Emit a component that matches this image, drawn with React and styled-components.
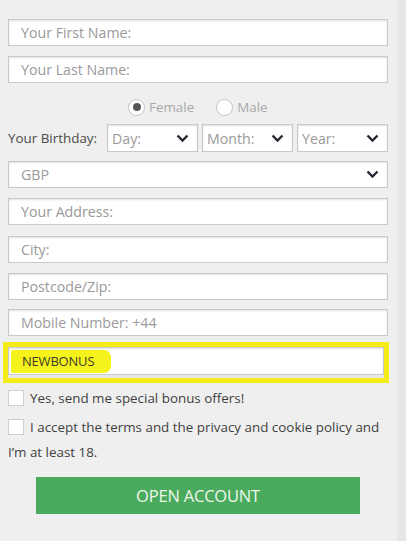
import styled, { createGlobalStyle } from "styled-components";

const Global = createGlobalStyle`
  html, body {
    margin: 0;
    padding: 0;
    height: 100%;
  }
  body {
    background: linear-gradient(to right, #efefef 397px, #e7e7e7 397px);
    font-family: "Open Sans", "Liberation Sans", sans-serif;
  }
`;

// whole registration form
const Form = styled.form`
  width: 380px;
  padding: 19px 0 0 8px;
  display: flex;
  flex-direction: column;
`;

const Field = styled.div`
  height: 27px;
  box-sizing: border-box;
  background: #fff;
  border: 1px solid #c9c9c9;
  box-shadow: inset 0 1px 2px rgba(0, 0, 0, 0.12);
  display: flex;
  align-items: center;
  padding: 0 8px 0 12px;
  font-size: 14.2px;
  color: ${(p) => (p.$filled ? "#3a3a3a" : "#9a9a9a")};
  margin-bottom: ${(p) => p.$mb ?? 10}px;
  flex: ${(p) => (p.$grow ? 1 : "none")};
  white-space: nowrap;
`;

const Placeholder = styled.span`
  flex: 1;
`;

const Chevron = () => (
  <svg width="13" height="9" viewBox="0 0 13 9">
    <path d="M1.5 1.5 L6.5 6.5 L11.5 1.5" fill="none" stroke="#2b2530" strokeWidth="2.4" />
  </svg>
);

const GenderRow = styled.div`
  height: 24px;
  display: flex;
  align-items: center;
  padding-left: 120px;
  margin: 2px 0 5px;
  font-size: 13.4px;
  color: #aaa;
`;

const Radio = styled.span`
  width: 17px;
  height: 17px;
  box-sizing: border-box;
  border-radius: 50%;
  background: #fff;
  border: 1px solid #c4c4c4;
  display: inline-flex;
  align-items: center;
  justify-content: center;
  margin-right: 4px;
  margin-left: ${(p) => p.$ml || 0}px;
  &::after {
    content: "";
    width: 8px;
    height: 8px;
    border-radius: 50%;
    background: ${(p) => (p.$checked ? "#555" : "transparent")};
  }
`;

const BirthdayRow = styled.div`
  display: flex;
  align-items: center;
  gap: 4px;
  margin-bottom: 9px;
  & > ${Field} {
    height: 28px;
    padding-left: 4px;
    margin-bottom: 0;
  }
`;

const Label = styled.span`
  width: 95px;
  font-size: 13.4px;
  color: #4a4a4a;
`;

const Highlight = styled.div`
  margin: -4px 0 0 -5px;
  width: 386px;
  box-sizing: border-box;
  border: 5px solid #f4ec1a;
  padding-bottom: 3px;
  background: #e8e8e8;
  & > ${Field} {
    margin-bottom: 0;
    height: 28px;
    padding-left: 2px;
  }
`;

const Marker = styled.span`
  background: #f6f21b;
  border-radius: 2px 7px 7px 2px;
  padding: 2px 17px 3px 11px;
  color: #3c3c2a;
  font-size: 13px;
  letter-spacing: -0.2px;
`;

const CheckRow = styled.label`
  display: block;
  font-size: 13.4px;
  color: #3f3f3f;
  line-height: 25px;
  margin-top: ${(p) => p.$mt || 0}px;
`;

const Box = styled.span`
  display: inline-block;
  vertical-align: -3px;
  width: 16px;
  height: 16px;
  box-sizing: border-box;
  background: #fff;
  border: 1px solid #cfcfcf;
  margin-right: 6px;
`;

const OpenButton = styled.button`
  margin: 12px 0 0 28px;
  width: 324px;
  height: 37px;
  border: none;
  background: #4aaa5d;
  color: #eef7ea;
  font-family: inherit;
  font-size: 16.5px;
  letter-spacing: -0.2px;
  cursor: pointer;
`;

export default function App() {
  return (
    <>
      <Global />
      <Form onSubmit={(e) => e.preventDefault()}>
        <Field>Your First Name:</Field>
        <Field>Your Last Name:</Field>
        <GenderRow>
          <Radio $checked />
          Female
          <Radio $ml={22} />
          Male
        </GenderRow>
        <BirthdayRow>
          <Label>Your Birthday:</Label>
          <Field $grow>
            <Placeholder>Day:</Placeholder>
            <Chevron />
          </Field>
          <Field $grow>
            <Placeholder>Month:</Placeholder>
            <Chevron />
          </Field>
          <Field $grow>
            <Placeholder>Year:</Placeholder>
            <Chevron />
          </Field>
        </BirthdayRow>
        <Field>
          <Placeholder>GBP</Placeholder>
          <Chevron />
        </Field>
        <Field $mb={11}>Your Address:</Field>
        <Field>City:</Field>
        <Field $mb={9}>Postcode/Zip:</Field>
        <Field>Mobile Number: +44</Field>
        <Highlight>
          <Field $filled>
            <Marker>NEWBONUS</Marker>
          </Field>
        </Highlight>
        <CheckRow $mt={3}>
          <Box />
          Yes, send me special bonus offers!
        </CheckRow>
        <CheckRow $mt={4}>
          <Box />
          I accept the terms and the privacy and cookie policy and I’m at least 18.
        </CheckRow>
        <OpenButton type="submit">OPEN ACCOUNT</OpenButton>
      </Form>
    </>
  );
}
